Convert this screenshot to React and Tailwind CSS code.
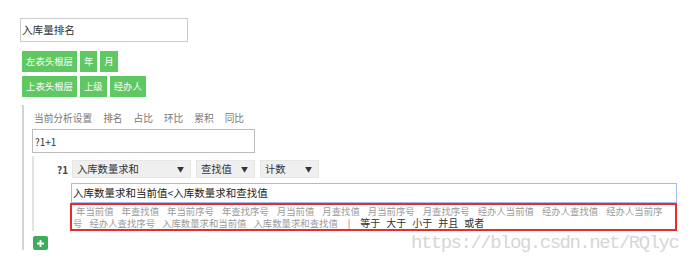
export default function App() {
  const fields1 = ['年当前值', '年查找值', '年当前序号', '年查找序号', '月当前值', '月查找值', '月当前序号', '月查找序号', '经办人当前值', '经办人查找值', '经办人当前序']
  const fields2 = ['号', '经办人查找序号', '入库数量求和当前值', '入库数量求和查找值']
  const ops = ['等于', '大于', '小于', '并且', '或者']
  const tabs = ['当前分析设置', '排名', '占比', '环比', '累积', '同比']

  return (
    <div className="w-[692px] h-[265px] bg-white relative overflow-hidden text-[#333] font-['Noto_Sans_CJK_SC',sans-serif]">
      {/* Name input */}
      <div className="pt-[18px] pl-[20px]">
        <div className="w-[168px] h-[24px] border border-[#ccc] flex items-center pl-[1px] text-[10.6px] leading-none">
          入库量排名
        </div>
      </div>

      {/* Header buttons */}
      <div className="pl-[22px] mt-[9px] flex flex-col gap-[4px]">
        <div className="flex gap-[3px]">
          {['左表头根层', '年', '月'].map((t) => (
            <div key={t} className="h-[21px] px-[4px] bg-[#5fc862] text-white text-[9.4px] flex items-center">{t}</div>
          ))}
        </div>
        <div className="flex gap-[3px]">
          {['上表头根层', '上级', '经办人'].map((t) => (
            <div key={t} className="h-[21px] px-[4px] bg-[#5fc862] text-white text-[9.4px] flex items-center">{t}</div>
          ))}
        </div>
      </div>

      {/* Analysis section */}
      <div className="ml-[22px] mt-[8px] border-l-2 border-[#d4d4d4] pl-[8px] pt-[7px]">
        <div className="flex gap-[11px] pl-[2px] text-[9.7px] leading-[12px] text-[#777]">
          {tabs.map((t) => (
            <span key={t}>{t}</span>
          ))}
        </div>

        <div className="mt-[5px] w-[223px] h-[24px] border border-[#bbb] flex items-center pl-[2px] text-[10px]">
          ?1+1
        </div>

        <div className="mt-[3px] border-l-2 border-[#e2e2e2] pt-[4px]">
          <div className="flex items-center">
            <span className="ml-[23px] w-[15px] text-[10px] font-bold text-[#444]">?1</span>
            <div className="flex gap-[5px]">
              <Select label="入库数量求和" w="w-[119px]" />
              <Select label="查找值" w="w-[59px]" />
              <Select label="计数" w="w-[59px]" />
            </div>
          </div>

          <div className="ml-[37px] mt-[5px] w-[606px] h-[20px] border border-[#9fbdf0] flex items-center pl-[1px] text-[10.5px] text-[#222]">
            入库数量求和当前值&lt;入库数量求和查找值
          </div>

          <div className="ml-[36px] w-[607px] h-[28px] border-2 border-[#e62d2d] text-[9.4px] leading-[12px] text-[#9a9a9a]">
            <div className="flex h-[12px] gap-[8px] pl-[4px]">
              {fields1.map((f) => (
                <span key={f}>{f}</span>
              ))}
            </div>
            <div className="flex h-[12px] gap-[7px] pl-[1px]">
              {fields2.map((f) => (
                <span key={f}>{f}</span>
              ))}
              <span className="ml-[3px] text-[#777]">|</span>
              <span className="flex gap-[6px] ml-[3px] text-[10px] leading-[12px] text-[#333]">
                {ops.map((o) => (
                  <span key={o}>{o}</span>
                ))}
              </span>
            </div>
          </div>
        </div>

        {/* Add button */}
        <div className="ml-[1px] mt-[5px] w-[15px] h-[14px] rounded-[2px] bg-[#3dad5c] flex items-center justify-center">
          <svg width="9" height="9" viewBox="0 0 9 9">
            <path d="M4.5 1v7M1 4.5h7" stroke="white" strokeWidth="1.8" />
          </svg>
        </div>
      </div>

      {/* Watermark */}
      <div className="absolute left-[411px] top-[233px] text-[19px] leading-[20px] tracking-[-1.5px] text-[#d6d6d6] font-['Liberation_Mono',monospace]">
        https://blog.csdn.net/RQlyc
      </div>
    </div>
  )
}

function Select({ label, w }) {
  return (
    <div className={`${w} h-[18px] bg-[#efefef] border border-[#e6e6e6] flex items-center justify-between pl-[4px] pr-[6px] text-[10.3px] leading-[12px] text-[#333]`}>
      <span>{label}</span>
      <span className="text-[7px] text-[#333]">▼</span>
    </div>
  )
}
